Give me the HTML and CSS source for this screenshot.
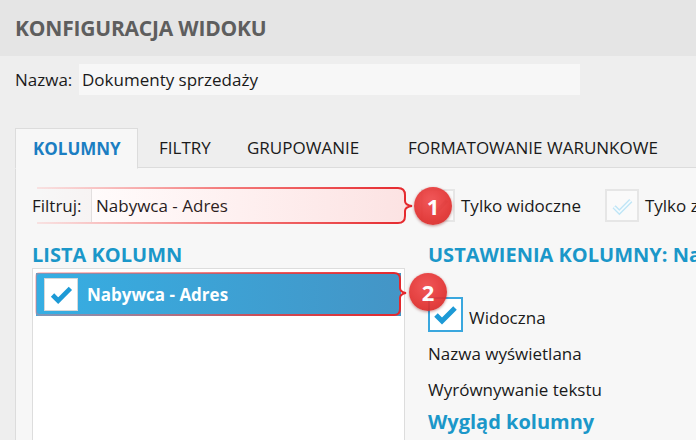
FILE: index.html
```html
<!DOCTYPE html>
<html lang="pl">
<head>
<meta charset="utf-8">
<title>Konfiguracja widoku</title>
<link rel="stylesheet" href="styles.css">
</head>
<body>
<div class="header"><h1 class="title">KONFIGURACJA WIDOKU</h1></div>

<div class="name-row">
  <span class="name-label">Nazwa:</span>
  <div class="name-input">Dokumenty sprzedaży</div>
</div>

<div class="tabs">
  <div class="tab tab-active">KOLUMNY</div>
  <div class="tab tab-filtry">FILTRY</div>
  <div class="tab tab-grup">GRUPOWANIE</div>
  <div class="tab tab-format">FORMATOWANIE WARUNKOWE</div>
  <div class="tab-rest"></div>
</div>

<div class="panel">
  <div class="filter-row">
    <span class="filter-label">Filtruj:</span>
    <div class="filter-input">Nabywca - Adres</div>
    <span class="cb cb-plain cb-hidden">
      <svg viewBox="0 0 34 33" width="30" height="29"><path d="M9 18 L15 24 L27 11" fill="none" stroke="#c8c8c8" stroke-width="4"/></svg>
    </span>
    <span class="cb-text">Tylko widoczne</span>
    <span class="cb cb-plain cb-faded">
      <svg viewBox="0 0 34 33" width="30" height="29"><path d="M8 18 L14 24 L27 11" fill="none" stroke="#bfe5f6" stroke-width="5"/><path d="M8 18 L14 24 L27 11" fill="none" stroke="#f4fbfe" stroke-width="2"/></svg>
    </span>
    <span class="cb-text">Tylko zaznaczone</span>
  </div>

  <div class="columns">
    <div class="col-left">
      <h2 class="section-title">LISTA KOLUMN</h2>
      <div class="list">
        <div class="list-item">
          <span class="item-cb">
            <svg viewBox="0 0 34 33" width="32" height="31"><path d="M8 17 L14 23 L27 10" fill="none" stroke="#1d9ad6" stroke-width="5"/></svg>
          </span>
          <span class="item-text">Nabywca - Adres</span>
        </div>
      </div>
    </div>
    <div class="col-right">
      <h2 class="section-title">USTAWIENIA KOLUMNY: Nabywca - Adres</h2>
      <div class="setting-row check-row">
        <span class="cb cb-blue">
          <svg viewBox="0 0 31 31" width="31" height="31"><path d="M6 16 L12 22 L25 9" fill="none" stroke="#1d9ad6" stroke-width="5"/></svg>
        </span>
        <span class="cb-text">Widoczna</span>
      </div>
      <div class="setting-row">Nazwa wyświetlana</div>
      <div class="setting-row">Wyrównywanie tekstu</div>
      <h3 class="sub-title">Wygląd kolumny</h3>
    </div>
  </div>
</div>

<!-- annotation overlays -->
<svg class="anno anno-1" width="384" height="40" viewBox="0 0 384 40">
  <defs>
    <linearGradient id="s1" x1="0" x2="1" y1="0" y2="0">
      <stop offset="0" stop-color="#ff6a6a" stop-opacity="0.15"/>
      <stop offset="0.5" stop-color="#f24848" stop-opacity="0.7"/>
      <stop offset="1" stop-color="#e4262b" stop-opacity="1"/>
    </linearGradient>
    <linearGradient id="f1" x1="0" x2="1" y1="0" y2="0">
      <stop offset="0" stop-color="#ff5a5a" stop-opacity="0"/>
      <stop offset="1" stop-color="#ea4a4a" stop-opacity="0.16"/>
    </linearGradient>
  </defs>
  <path d="M1 2 H362 Q369 2 369 9 V15 Q369 19 376 20 Q369 21 369 25 V30 Q369 37 362 37 H1" fill="url(#f1)" stroke="url(#s1)" stroke-width="2"/>
</svg>

<svg class="anno anno-2" width="380" height="48" viewBox="0 0 380 48">
  <defs>
    <linearGradient id="s2" x1="0" x2="1" y1="0" y2="0">
      <stop offset="0" stop-color="#ff7070" stop-opacity="0.35"/>
      <stop offset="0.6" stop-color="#ee3a3a" stop-opacity="0.8"/>
      <stop offset="1" stop-color="#e4262b" stop-opacity="1"/>
    </linearGradient>
  </defs>
  <path d="M6 2 H360 Q366 2 366 8 V17 Q366 21 372 22 Q366 23 366 27 V38 Q366 44 360 44 H6 Q2 44 2 40 V6 Q2 2 6 2 Z" fill="none" stroke="url(#s2)" stroke-width="2"/>
</svg>

<div class="badge badge-1">1</div>
<div class="badge badge-2">2</div>
</body>
</html>
```

FILE: styles.css
```css
* { box-sizing: border-box; }
html, body { margin: 0; padding: 0; }
body {
  width: 696px;
  height: 440px;
  overflow: hidden;
  background: #eeeeee;
  font-family: "Open Sans", "Noto Sans", "DejaVu Sans", sans-serif;
  font-size: 17px;
  color: #1a1a1a;
  position: relative;
}
.header {
  height: 56px;
  background: #e5e5e5;
  display: flex;
  align-items: center;
  padding-left: 15px;
}
.title {
  margin: 0;
  font-size: 21px;
  font-weight: 700;
  color: #5e5e5e;
  letter-spacing: -0.2px;
}
.name-row {
  margin-top: 8px;
  height: 31px;
  display: flex;
  align-items: center;
  padding-left: 15px;
}
.name-label { width: 64px; flex: none; }
.name-input {
  width: 501px;
  height: 31px;
  flex: none;
  background: #f7f7f7;
  display: flex;
  align-items: center;
  padding-left: 3px;
}
.tabs {
  margin-top: 33px;
  height: 40px;
  display: flex;
  padding-left: 15px;
}
.tab {
  flex: none;
  height: 40px;
  display: flex;
  align-items: center;
  border-bottom: 1px solid #dcdcdc;
  font-size: 17px;
  color: #1a1a1a;
  white-space: nowrap;
}
.tab-active {
  width: 123px;
  padding-left: 17px;
  background: #f7f7f7;
  border: 1px solid #dcdcdc;
  border-bottom: 1px solid #f7f7f7;
  color: #1b7ec2;
  font-weight: 700;
  height: 41px;
}
.tab-filtry { width: 90px; padding-left: 21px; }
.tab-grup { width: 160px; padding-left: 19px; }
.tab-format { width: 290px; padding-left: 20px; }
.tab-rest { flex: 1; border-bottom: 1px solid #dcdcdc; height: 40px; }
.panel {
  margin-left: 15px;
  height: 272px;
  overflow: hidden;
  background: #f7f7f7;
  border-left: 1px solid #dcdcdc;
  padding: 21px 0 0 16px;
}
.filter-row {
  display: flex;
  align-items: center;
  height: 33px;
  white-space: nowrap;
}
.filter-row > * { flex: none; }
.filter-label { width: 59px; }
.filter-input {
  width: 314px;
  height: 33px;
  background: #ffffff;
  border-left: 1px solid #e2e2e2;
  display: flex;
  align-items: center;
  padding-left: 4px;
}
.cb {
  width: 34px;
  height: 33px;
  flex: none;
  display: flex;
  align-items: center;
  justify-content: center;
}
.cb svg { display: block; }
.cb-plain {
  background: #fafafa;
  border: 2px solid #e6e6e6;
}
.cb-hidden { margin-left: 16px; }
.cb-faded { margin-left: 24px; }
.cb-text { margin-left: 6px; white-space: nowrap; }
.columns {
  display: flex;
  margin-top: 19px;
}
.col-left { width: 373px; flex: none; }
.col-right { margin-left: 23px; white-space: nowrap; flex: none; }
.section-title {
  margin: 0;
  height: 27px;
  font-size: 20px;
  font-weight: 700;
  color: #1b97c9;
  line-height: 27px;
  white-space: nowrap;
}
.list {
  height: 200px;
  background: #ffffff;
  border: 1px solid #dddddd;
  padding: 4px 3px 0 3px;
}
.list-item {
  height: 43px;
  display: flex;
  align-items: center;
  padding-left: 8px;
  background: linear-gradient(to right, #36aee3, #4495c6);
}
.item-cb {
  width: 34px;
  height: 33px;
  background: #ffffff;
  border: 1px solid #d8d8d8;
  display: flex;
  align-items: center;
  justify-content: center;
}
.item-cb svg { display: block; }
.item-text {
  margin-left: 9px;
  color: #ffffff;
  font-weight: 700;
  font-size: 17px;
}
.setting-row {
  height: 36px;
  display: flex;
  align-items: center;
}
.check-row {
  margin-top: 29px;
  height: 35px;
  margin-bottom: 3px;
}
.check-row .cb-text { margin-top: 6px; }
.cb-blue {
  width: 35px;
  height: 35px;
  border: 2px solid #3aa7de;
  background: #ffffff;
}
.sub-title {
  margin: 0;
  height: 30px;
  line-height: 30px;
  font-size: 20px;
  font-weight: 700;
  color: #1b97c9;
}
.anno {
  position: absolute;
  display: block;
}
.anno-1 { left: 36px; top: 186px; }
.anno-2 { left: 34px; top: 271px; }
.badge {
  position: absolute;
  width: 38px;
  height: 38px;
  border-radius: 50%;
  background: radial-gradient(circle at 45% 35%, #f04a4c 0%, #e2302f 60%, #cf2424 100%);
  box-shadow: 0 1px 3px rgba(120, 0, 0, 0.45);
  color: #ffffff;
  font-size: 22px;
  font-weight: 700;
  display: flex;
  align-items: center;
  justify-content: center;
  opacity: 0.92;
}
.badge-1 { left: 414px; top: 187px; }
.badge-2 { left: 409px; top: 273px; }
```
